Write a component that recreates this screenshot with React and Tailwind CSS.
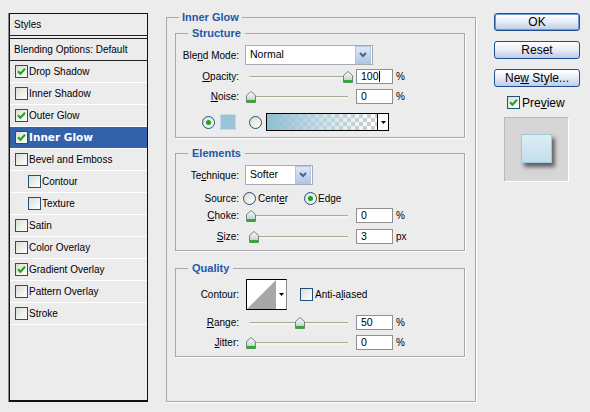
import React from "react";

const items = [
  { name: "Drop Shadow", on: true },
  { name: "Inner Shadow", on: false },
  { name: "Outer Glow", on: true },
  { name: "Inner Glow", on: true, sel: true },
  { name: "Bevel and Emboss", on: false },
  { name: "Contour", on: false, ind: true },
  { name: "Texture", on: false, ind: true },
  { name: "Satin", on: false },
  { name: "Color Overlay", on: false },
  { name: "Gradient Overlay", on: true },
  { name: "Pattern Overlay", on: false },
  { name: "Stroke", on: false },
];

function Check({ on }) {
  return (
    <span className="w-[13px] h-[13px] shrink-0 border border-[#1c5180] bg-linear-to-br from-[#dcdcd5] to-white flex items-center justify-center">
      {on && (
        <svg width="9" height="9" viewBox="0 0 9 9">
          <path d="M1 4.3 L3.4 6.8 L8 1.8" fill="none" stroke="#21a121" strokeWidth="2" />
        </svg>
      )}
    </span>
  );
}

function Radio({ on }) {
  return (
    <span className="w-[13px] h-[13px] shrink-0 rounded-full border border-[#1c5180] bg-linear-to-br from-[#dcdcd5] to-white flex items-center justify-center">
      {on && <span className="w-[5px] h-[5px] rounded-full bg-[#21a121]" />}
    </span>
  );
}

function Label({ children }) {
  return <span className="w-[63px] shrink-0 text-right">{children}</span>;
}

function Slider({ pct }) {
  return (
    <div className="relative w-[107px] h-[12px] ml-[7px] flex items-center shrink-0">
      <div className="ml-[3px] mt-[1px] w-[99px] h-[3px] bg-[#f5f4ea] border-t border-[#a9a99b] rounded-l-full" />
      <svg className="absolute top-0" style={{ left: pct * 0.97 }} width="10" height="12" viewBox="0 0 10 12">
        <defs>
          <linearGradient id="thumb" x1="0" y1="0" x2="0" y2="1">
            <stop offset="0" stopColor="#ffffff" />
            <stop offset="1" stopColor="#b7c4c4" />
          </linearGradient>
        </defs>
        <path d="M0.5 4.5 L5 0.5 L9.5 4.5 V11.5 H0.5 Z" fill="url(#thumb)" stroke="#6f8585" />
        <rect x="1" y="9" width="8" height="2.5" fill="#2bae2b" />
      </svg>
    </div>
  );
}

function Num({ value, caret }) {
  return (
    <div className="ml-[3px] w-[37px] h-[15px] shrink-0 border border-[#8e8f8f] bg-white flex items-center pl-[4px] text-[10.5px]">
      {value}
      {caret && <span className="w-px h-[11px] bg-black" />}
    </div>
  );
}

function Select({ value, w }) {
  return (
    <div className={`ml-[6px] h-[20px] ${w} border border-[#a5acb5] bg-white flex items-center`}>
      <span className="flex-1 pl-[4px] text-[10.5px]">{value}</span>
      <span className="w-[16px] h-[18px] mr-px border border-[#b3c5e2] bg-linear-to-b from-[#dde7f8] to-[#b2c6e7] flex items-center justify-center">
        <svg width="8" height="6" viewBox="0 0 8 6">
          <path d="M1 1 L4 4 L7 1" fill="none" stroke="#4d6185" strokeWidth="2" />
        </svg>
      </span>
    </div>
  );
}

function U({ children }) {
  return <span className="underline underline-offset-[1px]">{children}</span>;
}

function Btn({ children, def }) {
  return (
    <div
      className={`w-[86px] h-[18px] rounded-[3px] border border-[#1f4e92] bg-linear-to-b from-white via-[#e6ecf7] to-[#bccbe6] flex items-center justify-center text-[12px] ${
        def ? "shadow-[inset_0_0_0_1px_#6f9ae0]" : ""
      }`}
    >
      <span>{children}</span>
    </div>
  );
}

export default function App() {
  return (
    <div className="w-[590px] h-[412px] bg-[#ececec] flex font-['Liberation_Sans',Arial,sans-serif] text-[10px] text-black">
      {/* styles list */}
      <div className="ml-[9px] mt-[13px] w-[139px] h-[389px] border border-b-2 border-[#111] shadow-[-1px_0_0_#8a8a8a] flex flex-col">
        <div className="h-[22px] border-b border-[#222] flex items-center pl-[4px]">Styles</div>
        <div className="h-[2px]" />
        <div className="h-[23px] border-y border-[#222] flex items-center pl-[4px]">Blending Options: Default</div>
        {items.map((it) => (
          <div
            key={it.name}
            className={`h-[22px] border-b border-white flex items-center ${it.ind ? "pl-[18px]" : "pl-[5px]"} ${
              it.sel ? "bg-[#3462aa] text-white" : ""
            }`}
          >
            <Check on={it.on} />
            <span className={`ml-[1px] ${it.sel ? "font-['DejaVu_Sans',sans-serif] font-bold text-[10.5px]" : ""}`}>
              {it.name}
            </span>
          </div>
        ))}
      </div>

      {/* settings */}
      <fieldset className="ml-[18px] mt-[10px] w-[310px] h-[392px] border border-[#a8a8a8] shadow-[1px_1px_0_#fff] px-[8px] pt-[2px]">
        <legend className="ml-[4px] px-[3px] text-[11px] leading-[14px] font-bold text-[#2357a8]">Inner Glow</legend>

        <fieldset className="w-[290px] border border-[#a8a8a8] shadow-[1px_1px_0_#fff] pb-[6px]">
          <legend className="ml-[12px] px-[4px] text-[11px] leading-[14px] font-bold text-[#2357a8]">Structure</legend>
          <div className="mt-[5px] flex items-center">
            <Label>
              Ble<U>n</U>d Mode:
            </Label>
            <Select value="Normal" w="w-[128px]" />
          </div>
          <div className="mt-[4px] h-[15px] flex items-center">
            <Label>
              <U>O</U>pacity:
            </Label>
            <Slider pct={100} />
            <Num value="100" caret />
            <span className="ml-[3px]">%</span>
          </div>
          <div className="mt-[5px] h-[15px] flex items-center">
            <Label>
              <U>N</U>oise:
            </Label>
            <Slider pct={0} />
            <Num value="0" />
            <span className="ml-[3px]">%</span>
          </div>
          <div className="mt-[9px] h-[18px] flex items-center pl-[26px]">
            <Radio on />
            <span className="ml-[5px] w-[16px] h-[16px] bg-[#9ac4d8] border border-[#c9d9e1]" />
            <span className="ml-[13px]">
              <Radio />
            </span>
            <div className="ml-[4px] w-[123px] h-[18px] border border-black flex">
              <div className="flex-1 border-r border-black bg-[repeating-conic-gradient(#cdcdcd_0_25%,#ffffff_0_50%)] bg-[length:8px_8px]">
                <div className="h-full bg-linear-to-r from-[#8fbdd2] via-[#b5d5e3]/70 to-[#ffffff]/0" />
              </div>
              <div className="w-[10px] bg-white flex items-center justify-center">
                <svg width="5" height="3" viewBox="0 0 5 3">
                  <path d="M0 0 H5 L2.5 3 Z" fill="#000" />
                </svg>
              </div>
            </div>
          </div>
        </fieldset>

        <fieldset className="mt-[8px] w-[290px] border border-[#a8a8a8] shadow-[1px_1px_0_#fff] pb-[6px]">
          <legend className="ml-[12px] px-[4px] text-[11px] leading-[14px] font-bold text-[#2357a8]">Elements</legend>
          <div className="mt-[5px] flex items-center">
            <Label>
              Te<U>c</U>hnique:
            </Label>
            <Select value="Softer" w="w-[68px]" />
          </div>
          <div className="mt-[7px] h-[13px] flex items-center">
            <Label>Source:</Label>
            <div className="ml-[4px] w-[61px] flex items-center">
              <Radio />
              <span className="ml-[2px]">
                Cent<U>e</U>r
              </span>
            </div>
            <Radio on />
            <span className="ml-[1px]">Edge</span>
          </div>
          <div className="mt-[3px] h-[15px] flex items-center">
            <Label>
              <U>C</U>hoke:
            </Label>
            <Slider pct={0} />
            <Num value="0" />
            <span className="ml-[3px]">%</span>
          </div>
          <div className="mt-[6px] h-[15px] flex items-center">
            <Label>
              <U>S</U>ize:
            </Label>
            <Slider pct={3} />
            <Num value="3" />
            <span className="ml-[3px]">px</span>
          </div>
        </fieldset>

        <fieldset className="mt-[10px] w-[290px] border border-[#a8a8a8] shadow-[1px_1px_0_#fff] pb-[6px]">
          <legend className="ml-[12px] px-[4px] text-[11px] leading-[14px] font-bold text-[#2357a8]">Quality</legend>
          <div className="mt-[4px] h-[31px] flex items-center">
            <Label>Contour:</Label>
            <div className="ml-[7px] w-[41px] h-[31px] border border-black border-r-[#8a8a8a] bg-white flex">
              <svg width="29" height="29" viewBox="0 0 29 29">
                <path d="M0 29 L29 0 V29 Z" fill="#a8a8aa" />
              </svg>
              <div className="flex-1 flex items-center justify-center">
                <svg width="5" height="3" viewBox="0 0 5 3">
                  <path d="M0 0 H5 L2.5 3 Z" fill="#000" />
                </svg>
              </div>
            </div>
            <span className="ml-[13px]">
              <Check />
            </span>
            <span className="ml-[2px]">
              Anti-a<U>l</U>iased
            </span>
          </div>
          <div className="mt-[5px] h-[15px] flex items-center">
            <Label>
              <U>R</U>ange:
            </Label>
            <Slider pct={50} />
            <Num value="50" />
            <span className="ml-[3px]">%</span>
          </div>
          <div className="mt-[5px] h-[15px] flex items-center">
            <Label>
              <U>J</U>itter:
            </Label>
            <Slider pct={0} />
            <Num value="0" />
            <span className="ml-[3px]">%</span>
          </div>
        </fieldset>
      </fieldset>

      {/* buttons */}
      <div className="ml-[18px] mt-[13px] w-[86px] flex flex-col">
        <Btn def>OK</Btn>
        <div className="mt-[10px]">
          <Btn>Reset</Btn>
        </div>
        <div className="mt-[10px]">
          <Btn>
            Ne<U>w</U> Style...
          </Btn>
        </div>
        <div className="mt-[9px] h-[13px] flex items-center pl-[13px] text-[12px]">
          <Check on />
          <span className="ml-[2px]">
            Pre<U>v</U>iew
          </span>
        </div>
        <div className="mt-[8px] ml-[10px] w-[65px] h-[65px] bg-[#d6d6d6] border border-[#bababa] border-r-white border-b-white pl-[16px] pt-[16px]">
          <div className="w-[31px] h-[29px] border border-[#9fcbe0] bg-linear-to-b from-[#deedf4] to-[#c3deea] shadow-[3px_4px_4px_rgba(0,0,0,0.55)]" />
        </div>
      </div>
    </div>
  );
}
